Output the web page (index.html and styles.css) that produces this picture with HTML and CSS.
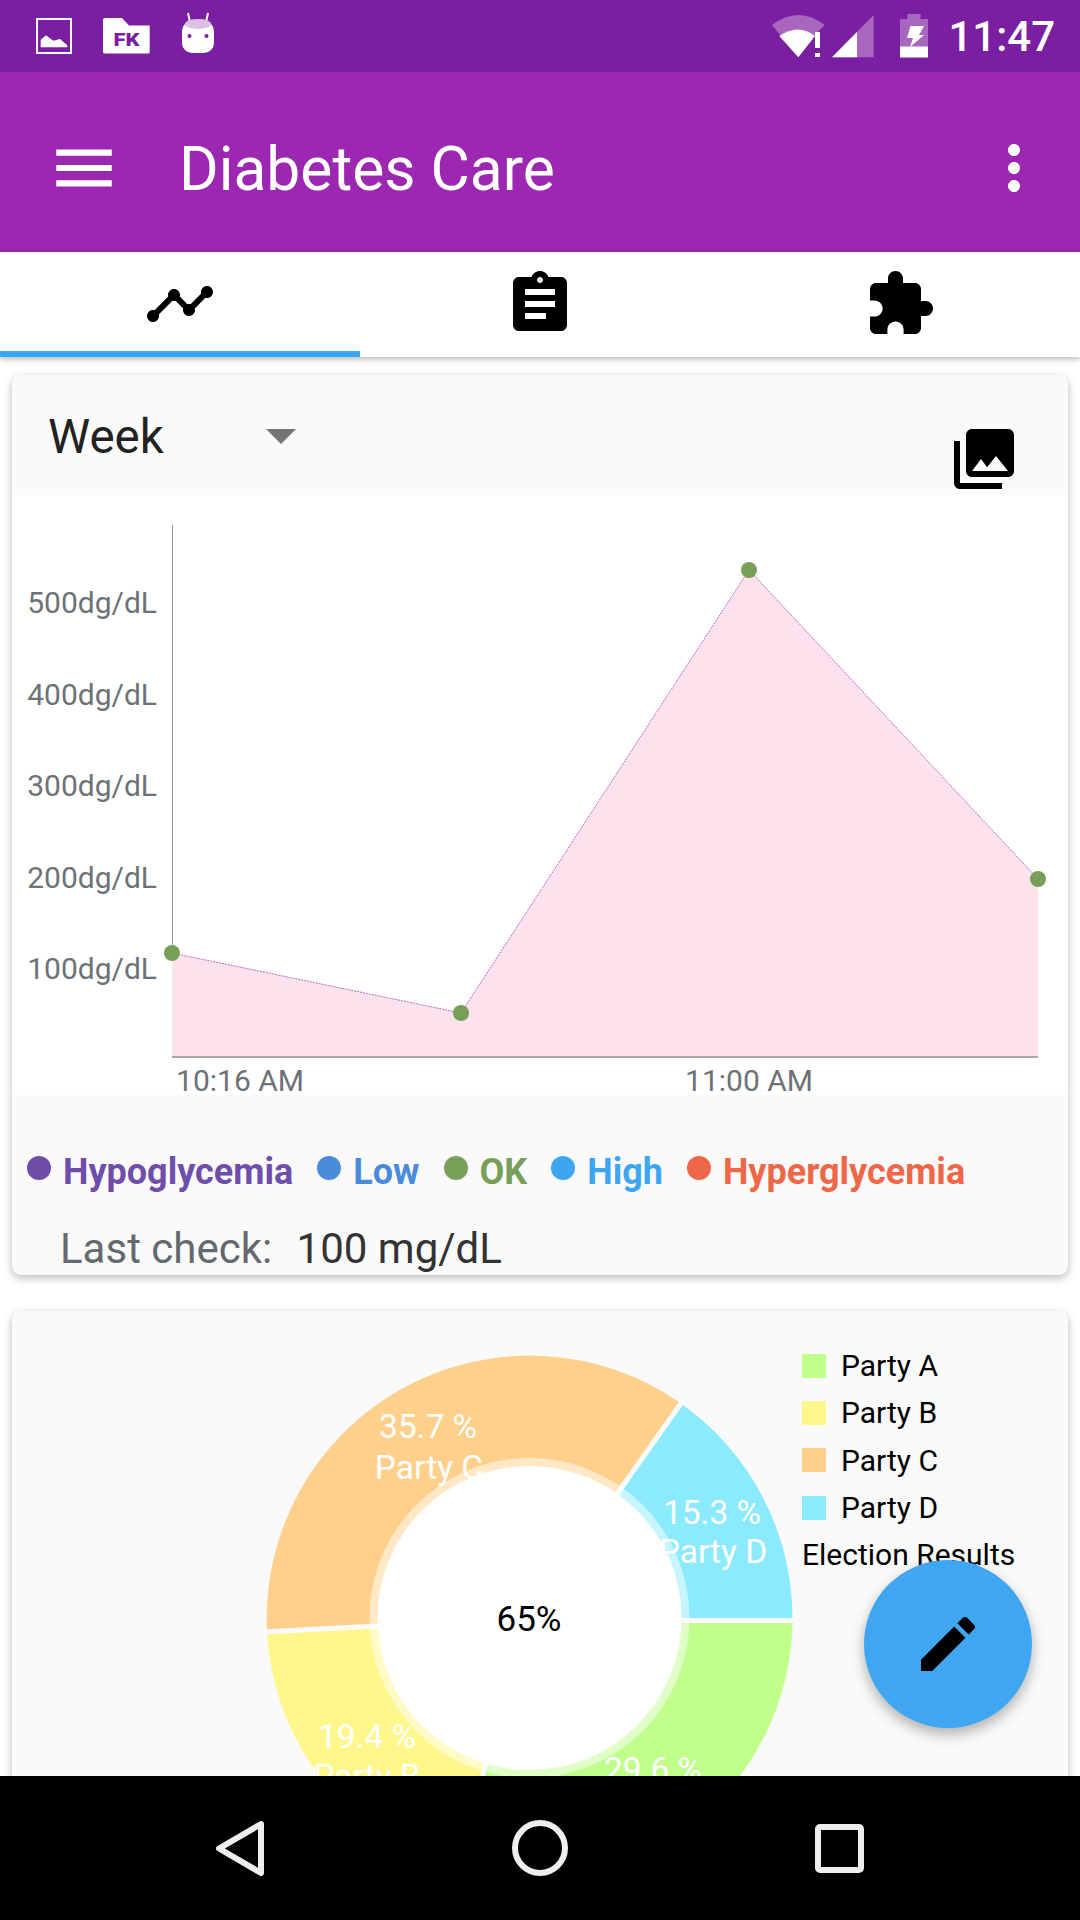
FILE: index.html
```html
<!DOCTYPE html>
<html lang="en">

<head>
    <meta charset="UTF-8">
    <meta name="viewport" content="width=device-width, initial-scale=1.0">
    <title>Diabetes Care</title>

    <link rel="stylesheet" href="styles.css">
</head>

<body>

    <div class="status-bar">
        <div class="status-left">
            <svg width="36" height="36" viewBox="0 0 36 36">
                <rect x="1" y="1" width="34" height="34" fill="none" stroke="#fff" stroke-width="2" />
                <path d="M4.7 29.3v-7.6L10 17.3l7.3 5.4 6.7-1.7 7.3 6.3v2z" fill="#fff" />
            </svg>
            <svg width="47" height="36" viewBox="0 0 47 36">
                <path d="M0 2q0-2 2-2h17l7 7.5h20.7V34q0 1.500-1.700 1.500H2q-2 0-2-1.500z" fill="#fff" />
                <text class="folder-mark" x="10.500" y="28" textLength="26" lengthAdjust="spacingAndGlyphs">FK</text>
            </svg>
            <svg width="36" height="42" viewBox="0 0 36 42">
                <path d="M7 1l2 9M27 1l-2 9" stroke="#fff" stroke-width="2" />
                <rect x="1" y="9" width="32" height="32" rx="10" fill="#fff" />
                <ellipse cx="17" cy="12" rx="13" ry="5" fill="#dcc0e3" />
                <circle cx="8.500" cy="24" r="2" fill="#7b1fa2" />
                <circle cx="25.500" cy="24" r="2" fill="#7b1fa2" />
            </svg>
        </div>
        <div class="status-right">
            <svg width="54" height="43" viewBox="0 0 54 43">
                <path d="M0 10Q26.300-10 52.700 10L42 21H9z" fill="#a966bf" />
                <path d="M26.300 42.300L7.300 21Q26 8 43 21z" fill="#fff" />
                <rect x="43" y="17" width="5" height="16" fill="#fff" />
                <rect x="43" y="38" width="5" height="4" fill="#fff" />
            </svg>
            <svg width="42" height="43" viewBox="0 0 42 43">
                <path d="M0 42.300L41.700 0v42.300z" fill="#a966bf" />
                <path d="M0 42.300L25 17v25.300z" fill="#fff" />
            </svg>
            <svg width="28" height="44" viewBox="0 0 28 44">
                <path d="M7.300 0h13.300v5H28v28H0V5h7.300z" fill="#a966bf" />
                <rect y="32.500" width="28" height="11" fill="#fff" />
                <path d="M10.500 12H24l-5 9h5L10 33l3-9H7z" fill="#fff" />
            </svg>
            <span class="clock">11:47</span>
        </div>
    </div>

    <div class="app-bar">
        <svg class="menu-icon" width="74" height="74" viewBox="0 0 24 24">
            <path d="M3 18h18v-2H3v2zm0-5h18v-2H3v2zm0-7v2h18V6H3z" fill="#fff" />
        </svg>
        <div class="app-title">Diabetes Care</div>
        <svg class="more-icon" width="72" height="72" viewBox="0 0 24 24">
            <path d="M12 8c1.100 0 2-.9 2-2s-.9-2-2-2-2 .9-2 2 .9 2 2 2zm0 2c-1.100 0-2 .9-2 2s.9 2 2 2 2-.9 2-2-.9-2-2-2zm0 6c-1.100 0-2 .9-2 2s.9 2 2 2 2-.9 2-2-.9-2-2-2z" fill="#fff" />
        </svg>
    </div>

    <div class="tabs">
        <div class="tab active">
            <svg width="72" height="72" viewBox="0 0 24 24">
                <path d="M23 8c0 1.100-.9 2-2 2-.18 0-.35-.02-.51-.07l-3.560 3.550c.05.16.07.34.07.52 0 1.100-.9 2-2 2s-2-.9-2-2c0-.18.02-.36.07-.52l-2.550-2.550c-.16.05-.34.07-.52.07s-.36-.02-.52-.07l-4.550 4.560c.05.16.07.33.07.51 0 1.100-.9 2-2 2s-2-.9-2-2 .9-2 2-2c.18 0 .35.02.51.07l4.560-4.550C8.020 9.360 8 9.180 8 9c0-1.100.9-2 2-2s2 .9 2 2c0 .18-.02.36-.07.52l2.550 2.550c.16-.05.34-.07.52-.07s.36.02.52.07l3.550-3.560C19.020 8.350 19 8.180 19 8c0-1.100.9-2 2-2s2 .9 2 2z" />
            </svg>
        </div>
        <div class="tab">
            <svg width="72" height="72" viewBox="0 0 24 24">
                <path d="M19 3h-4.180C14.400 1.840 13.300 1 12 1c-1.300 0-2.400.84-2.820 2H5c-1.100 0-2 .9-2 2v14c0 1.100.9 2 2 2h14c1.100 0 2-.9 2-2V5c0-1.100-.9-2-2-2zm-7 0c.55 0 1 .45 1 1s-.45 1-1 1-1-.45-1-1 .45-1 1-1zm2 14H7v-2h7v2zm3-4H7v-2h10v2zm0-4H7V7h10v2z" />
            </svg>
        </div>
        <div class="tab">
            <svg width="72" height="72" viewBox="0 0 24 24">
                <path d="M20.500 11H19V7c0-1.100-.9-2-2-2h-4V3.500C13 2.120 11.880 1 10.500 1S8 2.120 8 3.500V5H4c-1.100 0-1.990.9-1.990 2v3.800H3.500c1.490 0 2.700 1.210 2.700 2.700s-1.210 2.700-2.700 2.700H2V20c0 1.100.9 2 2 2h3.800v-1.500c0-1.490 1.210-2.700 2.700-2.700 1.490 0 2.700 1.210 2.700 2.700V22H17c1.100 0 2-.9 2-2v-4h1.500c1.380 0 2.500-1.120 2.500-2.500S21.880 11 20.500 11z" />
            </svg>
        </div>
    </div>

    <div class="content">

        <div class="card chart-card">
            <div class="card-head">
                <span class="range">Week</span>
                <span class="caret"></span>
                <svg class="gallery-icon" width="72" height="72" viewBox="0 0 24 24">
                    <path d="M22 16V4c0-1.100-.9-2-2-2H8c-1.100 0-2 .9-2 2v12c0 1.100.9 2 2 2h12c1.100 0 2-.9 2-2zm-11-4l2.030 2.710L16 11l4 5H8l3-4zM2 6v14c0 1.100.9 2 2 2h14v-2H4V6H2z" />
                </svg>
            </div>

            <svg class="line-chart" width="1056" height="600" viewBox="12 495 1056 600">
                <path d="M172.500 525V1057" stroke="#999" stroke-width="1" />
                <path d="M172 1057H1038" stroke="#888" stroke-width="1.500" />
                <path d="M172 953L461 1013 749 570 1038 879V1056H172z" fill="#fbe2ec" />
                <path d="M172 953L461 1013 749 570 1038 879" fill="none" stroke="#b56cc6" stroke-width="1" stroke-dasharray="2 1" />
                <circle class="point" cx="172" cy="953" r="8" />
                <circle class="point" cx="461" cy="1013" r="8" />
                <circle class="point" cx="749" cy="570" r="8" />
                <circle class="point" cx="1038" cy="879" r="8" />
                <text class="axis-y" x="157" y="613">500dg/dL</text>
                <text class="axis-y" x="157" y="705">400dg/dL</text>
                <text class="axis-y" x="157" y="796">300dg/dL</text>
                <text class="axis-y" x="157" y="888">200dg/dL</text>
                <text class="axis-y" x="157" y="979">100dg/dL</text>
                <text class="axis-x" x="240" y="1091">10:16 AM</text>
                <text class="axis-x" x="749" y="1091">11:00 AM</text>
            </svg>

            <div class="card-foot">
                <div class="levels">
                    <div class="level hypo"><span class="dot"></span>Hypoglycemia</div>
                    <div class="level low"><span class="dot"></span>Low</div>
                    <div class="level ok"><span class="dot"></span>OK</div>
                    <div class="level high"><span class="dot"></span>High</div>
                    <div class="level hyper"><span class="dot"></span>Hyperglycemia</div>
                </div>
                <div class="last-check">
                    <span class="last-label">Last check:</span>
                    <span class="last-value">100 mg/dL</span>
                </div>
            </div>
        </div>

        <div class="card pie-card">
            <svg class="pie" width="790" height="560" viewBox="12 1311 790 560">
                <path d="M529.500 1618L792.500 1618A263 263 0 0 1 454.400 1870z" fill="#c0ff8c" />
                <path d="M529.500 1618L454.400 1870A263 263 0 0 1 267 1632z" fill="#fff78c" />
                <path d="M529.500 1618L267 1632A263 263 0 0 1 681 1403.500z" fill="#ffd08c" />
                <path d="M529.500 1618L681 1403.500A263 263 0 0 1 792.500 1618z" fill="#8ceaff" />
                <path d="M529 1620.500L796 1620.500M529.500 1618L454.400 1870M529.500 1618L262 1632M529.500 1618L684 1399" stroke="#fafafa" stroke-width="5" />
                <circle cx="529.500" cy="1618" r="160" fill="#fff" opacity="0.5" />
                <circle cx="529.500" cy="1618" r="152" fill="#fff" />
                <text class="pie-label" x="428" y="1438">35.7 %</text>
                <text class="pie-label" x="429" y="1479">Party C</text>
                <text class="pie-label" x="712" y="1524">15.3 %</text>
                <text class="pie-label" x="713" y="1563">Party D</text>
                <text class="pie-label" x="367" y="1748">19.4 %</text>
                <text class="pie-label" x="367" y="1788">Party B</text>
                <text class="pie-label" x="653" y="1781">29.6 %</text>
                <text class="pie-label" x="653" y="1822">Party A</text>
                <text class="pie-center" x="529" y="1631">65%</text>
            </svg>
            <div class="pie-legend">
                <div class="party"><span class="swatch party-a"></span>Party A</div>
                <div class="party"><span class="swatch party-b"></span>Party B</div>
                <div class="party"><span class="swatch party-c"></span>Party C</div>
                <div class="party"><span class="swatch party-d"></span>Party D</div>
                <div class="party">Election Results</div>
            </div>
        </div>

        <div class="fab">
            <svg width="72" height="72" viewBox="0 0 24 24">
                <path d="M3 17.250V21h3.750L17.810 9.940l-3.750-3.750L3 17.250zM20.710 7.040c.39-.39.39-1.020 0-1.410l-2.340-2.340c-.39-.39-1.020-.39-1.410 0l-1.830 1.830 3.750 3.750 1.830-1.830z" />
            </svg>
        </div>

    </div>

    <div class="nav-bar">
        <svg width="72" height="72" viewBox="0 0 72 72">
            <path d="M57 12L15 36.500 57 61z" />
        </svg>
        <svg width="72" height="72" viewBox="0 0 72 72">
            <circle cx="36" cy="36" r="25" />
        </svg>
        <svg width="72" height="72" viewBox="0 0 72 72">
            <rect x="14" y="15" width="43" height="43" rx="2" />
        </svg>
    </div>

</body>

</html>
```

FILE: styles.css
```css
html {
    background-color: #fff;
}

body {
    margin: 0;
    width: 1080px;
    height: 1920px;
    display: flex;
    flex-direction: column;
    overflow: hidden;
    font-family: Roboto, sans-serif;
}

svg {
    display: block;
    flex-shrink: 0;
    overflow: visible;
}

/* status bar */
.status-bar {
    height: 72px;
    background-color: #7b1fa2;
    display: flex;
    justify-content: space-between;
    align-items: flex-start;
}

.status-left {
    display: flex;
    align-items: flex-end;
    gap: 31px;
    padding-left: 36px;
    padding-top: 12px;
}

.status-right {
    display: flex;
    align-items: center;
    height: 72px;
    padding-right: 25px;
}

.status-right svg:nth-child(2) {
    margin-left: 6px;
}

.status-right svg:nth-child(3) {
    margin-left: 26px;
}

.folder-mark {
    fill: #7b1fa2;
    font-size: 18.500px;
    font-weight: 900;
}

.clock {
    color: #fff;
    font-size: 42px;
    font-weight: 500;
    margin-left: 20px;
}

/* app bar */
.app-bar {
    height: 180px;
    box-sizing: border-box;
    background-color: #9c27b0;
    display: flex;
    align-items: center;
    padding: 12px 30px 0 47px;
}

.app-title {
    color: #fff;
    font-size: 60.500px;
    margin: 3px 0 0 58px;
}

.more-icon {
    margin-left: auto;
}

/* tabs */
.tabs {
    height: 105px;
    background-color: #fff;
    display: grid;
    grid-template-columns: 1fr 1fr 1fr;
    box-shadow: 0 2px 6px rgba(0, 0, 0, 0.3);
    position: relative;
    z-index: 1;
}

.tab {
    display: flex;
    justify-content: center;
    padding-top: 16px;
}

.tab.active {
    border-bottom: 6px solid #3da5f0;
}

/* cards */
.content {
    flex: 1;
    min-height: 0;
    overflow: hidden;
    position: relative;
    display: flex;
    flex-direction: column;
    gap: 36px;
    padding: 18px 12px 0;
}

.card {
    flex-shrink: 0;
    background-color: #fafafa;
    border-radius: 9px;
    box-shadow: 0 3px 8px rgba(0, 0, 0, 0.28);
}

.card-head {
    height: 120px;
    display: flex;
    align-items: center;
    padding: 2px 48px 0 36px;
    box-sizing: border-box;
}

.range {
    color: #222;
    font-size: 47.500px;
    margin: 2px 102px 0 0;
}

.caret {
    border-left: 15px solid transparent;
    border-right: 15px solid transparent;
    border-top: 15px solid #757575;
}

.gallery-icon {
    margin-left: auto;
    align-self: flex-end;
}

.line-chart {
    background-color: #fff;
}

.point {
    fill: #789f58;
}

.axis-y,
.axis-x {
    fill: #6d7277;
    font-size: 30px;
}

.axis-y {
    text-anchor: end;
}

.axis-x {
    text-anchor: middle;
}

.card-foot {
    height: 180px;
    padding: 57px 0 0 15px;
    box-sizing: border-box;
}

.levels {
    display: flex;
    gap: 24px;
}

.level {
    display: flex;
    font-size: 36px;
    font-weight: 700;
    line-height: 40px;
    white-space: nowrap;
}

.dot {
    width: 24px;
    height: 24px;
    border-radius: 50%;
    margin: 4px 12px 0 0;
    background-color: currentColor;
}

.hypo {
    color: #6f4eab;
}

.low {
    color: #4a8bdc;
}

.ok {
    color: #789f58;
}

.high {
    color: #3ea6f1;
}

.hyper {
    color: #ee6748;
}

.last-check {
    font-size: 42px;
    line-height: 50px;
    margin: 32px 0 0 33px;
}

.last-label {
    color: #63696e;
    margin-right: 14px;
}

.last-value {
    color: #333;
}

/* pie */
.pie-card {
    height: 600px;
    display: flex;
}

.pie-label {
    fill: #fff;
    font-size: 33.500px;
    text-anchor: middle;
}

.pie-center {
    fill: #000;
    font-size: 35px;
    text-anchor: middle;
}

.pie-legend {
    padding-top: 31px;
    font-size: 30px;
    color: #000;
}

.party {
    height: 47.300px;
    display: flex;
    align-items: center;
    white-space: nowrap;
}

.swatch {
    width: 24px;
    height: 24px;
    margin-right: 15px;
}

.party-a {
    background-color: #c0ff8c;
}

.party-b {
    background-color: #fff78c;
}

.party-c {
    background-color: #ffd08c;
}

.party-d {
    background-color: #8ceaff;
}

/* floating button */
.fab {
    position: absolute;
    right: 48px;
    bottom: 48px;
    width: 168px;
    height: 168px;
    border-radius: 50%;
    background-color: #3fa7f1;
    box-shadow: 0 6px 14px rgba(0, 0, 0, 0.3);
    display: flex;
    align-items: center;
    justify-content: center;
}

/* bottom navigation */
.nav-bar {
    height: 144px;
    background-color: #000;
    display: flex;
    justify-content: center;
    align-items: center;
    gap: 228px;
    position: relative;
    z-index: 1;
}

.nav-bar svg {
    fill: none;
    stroke: #eee;
    stroke-width: 6;
    stroke-linejoin: round;
}
```
